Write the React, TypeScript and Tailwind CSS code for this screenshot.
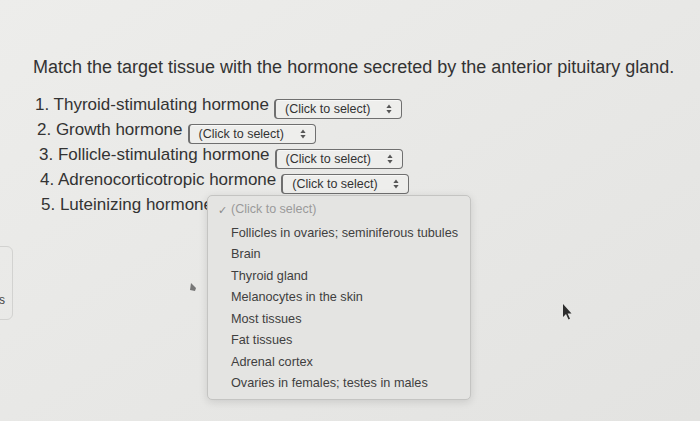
import type { ReactNode } from "react";

type Row = { label: string; indent: string; open?: boolean };

const rows: Row[] = [
  { label: "1. Thyroid-stimulating hormone", indent: "pl-[35px]" },
  { label: "2. Growth hormone", indent: "pl-[37px]" },
  { label: "3. Follicle-stimulating hormone", indent: "pl-[39px]" },
  { label: "4. Adrenocorticotropic hormone", indent: "pl-[40px]" },
  { label: "5. Luteinizing hormone", indent: "pl-[41px]", open: true },
];

const options = [
  "Follicles in ovaries; seminiferous tubules",
  "Brain",
  "Thyroid gland",
  "Melanocytes in the skin",
  "Most tissues",
  "Fat tissues",
  "Adrenal cortex",
  "Ovaries in females; testes in males",
];

function UpDown() {
  return (
    <svg width="6" height="10" viewBox="0 0 6 10" className="shrink-0">
      <path d="M3 0.5 L5.6 4 L0.4 4 Z" fill="#555" />
      <path d="M3 9.5 L5.6 6 L0.4 6 Z" fill="#555" />
    </svg>
  );
}

function SelectBox() {
  return (
    <div className="ml-[5px] mt-[7px] flex h-[20px] w-[128px] shrink-0 items-center justify-between rounded-[4px] border border-[#6f6f6f] border-l-[2px] bg-[#eeeeec] pl-[9px] pr-[9px] shadow-[inset_0_1px_0_rgba(255,255,255,0.6)]">
      <span className="text-[12.5px] leading-none text-[#333]">(Click to select)</span>
      <UpDown />
    </div>
  );
}

function MenuItem({ children, checked }: { children: ReactNode; checked?: boolean }) {
  return (
    <div className="flex h-[21.5px] items-center pl-[10px]">
      <span className="w-[13px] text-[11px] text-[#8a8a8a]">{checked ? "✓" : ""}</span>
      <span className={checked ? "text-[12.5px] text-[#9a9a9a]" : "text-[12.7px] text-[#3f3f3f]"}>{children}</span>
    </div>
  );
}

export default function App() {
  return (
    <div
      className="relative h-[421px] w-[700px] overflow-hidden bg-gradient-to-br from-[#ededeb] to-[#e3e3e1] pt-[55px]"
      style={{ fontFamily: '"Liberation Sans", Arial, sans-serif' }}
    >
      <h1 className="pl-[33px] text-[18px] leading-[24px] font-normal text-[#333]">
        Match the target tissue with the hormone secreted by the anterior pituitary gland.
      </h1>

      <div className="mt-[13px]">
        {rows.map((r) => (
          <div key={r.label} className={`flex h-[25px] items-start ${r.indent}`}>
            <span className="text-[17px] leading-[25px] whitespace-nowrap text-[#333]">{r.label}</span>
            {!r.open && <SelectBox />}
          </div>
        ))}
      </div>

      {/* open popup for the fifth select */}
      <div className="absolute top-[195px] left-[207px] h-[205px] w-[264px] rounded-[5px] border border-[#c4c4c2] bg-[#e4e4e2] pt-[3px] shadow-[0_2px_8px_rgba(0,0,0,0.12)]">
        <div className="mb-[2px]">
          <MenuItem checked>(Click to select)</MenuItem>
        </div>
        {options.map((o) => (
          <MenuItem key={o}>{o}</MenuItem>
        ))}
      </div>

      {/* edge of a neighbouring panel */}
      <div className="absolute top-[246px] left-[-50px] flex h-[74px] w-[63px] items-end justify-end rounded-[6px] border border-[#d2d2d0] pr-[7px] pb-[10px]">
        <span className="text-[12px] text-[#444]">s</span>
      </div>

      <svg className="absolute top-[283px] left-[190px]" width="7" height="8" viewBox="0 0 7 8">
        <path d="M1 0 L6 5 L5 8 L0 7 Z" fill="#777" />
      </svg>

      {/* mouse pointer */}
      <svg className="absolute top-[304px] left-[562px]" width="10" height="17" viewBox="0 0 10 17">
        <path d="M1 0 L1 13 L4 10 L6.5 15.5 L8 14.8 L5.6 9.4 L9.5 9.4 Z" fill="#2e2e2e" />
      </svg>
    </div>
  );
}
